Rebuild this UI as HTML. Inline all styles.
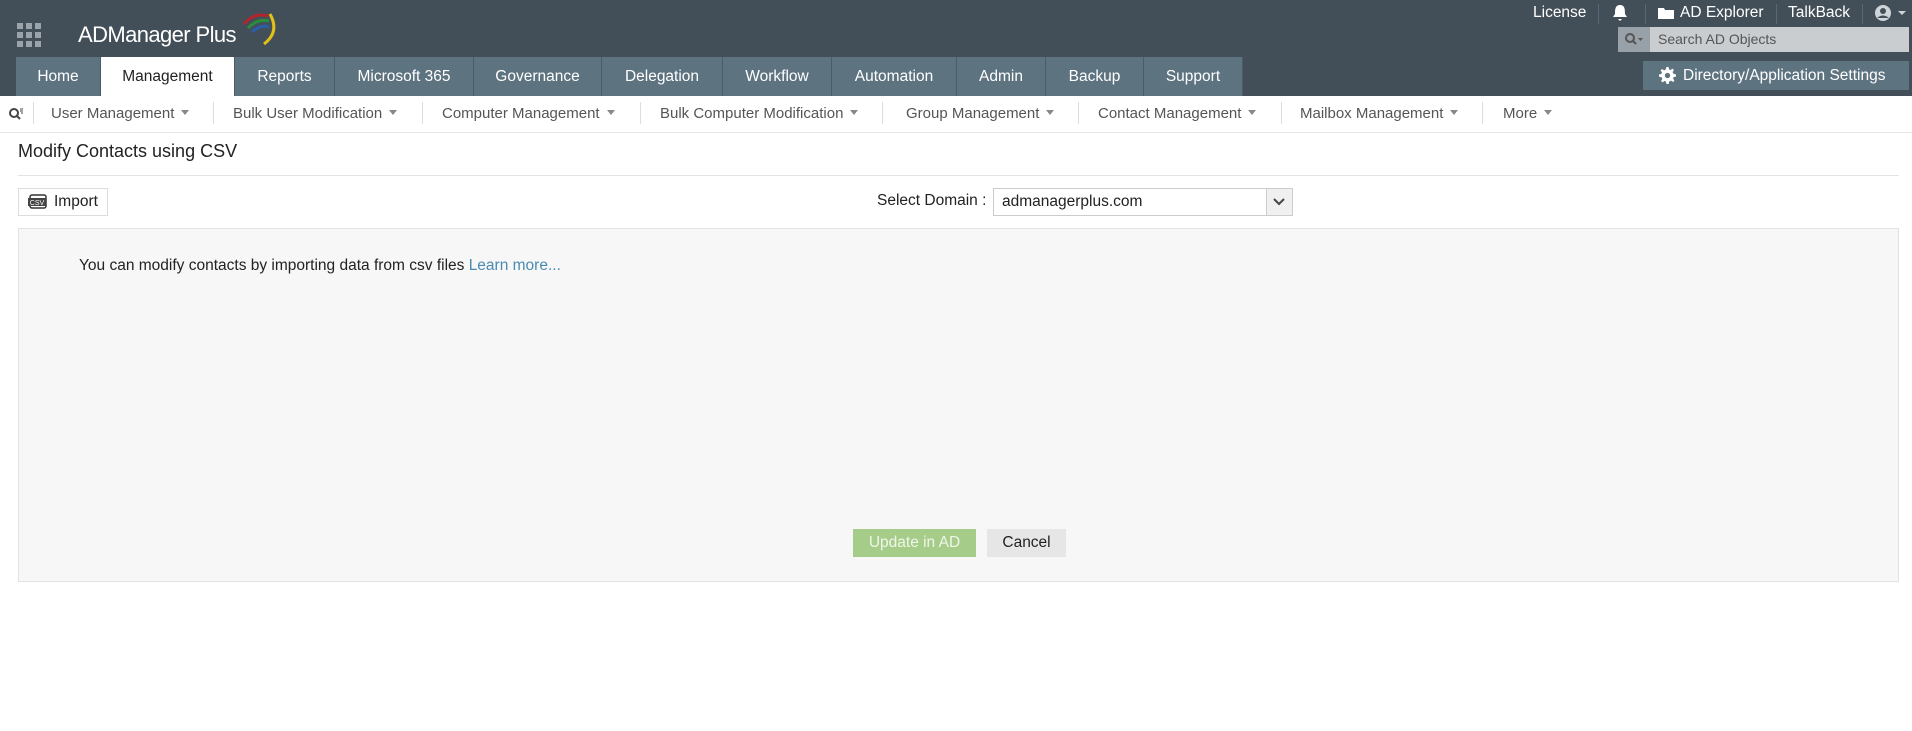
<!DOCTYPE html>
<html><head><meta charset="utf-8"><style>
*{margin:0;padding:0;box-sizing:border-box}
body{width:1912px;height:731px;background:#fff;font-family:"Liberation Sans",sans-serif;position:relative;overflow:hidden;color:#222}
.a{position:absolute;white-space:nowrap}
#hdr{left:0;top:0;width:1912px;height:96px;background:#434f58}
.tab{position:absolute;top:57px;height:39px;background:#5e7380;color:#fff;font-size:15.5px;line-height:39px;text-align:center;border-right:1px solid #4b5c66}
.tab.on{background:#fff;color:#222}
.sub{position:absolute;top:105px;font-size:15px;color:#555;white-space:nowrap}
.sub:after{content:"";display:inline-block;margin-left:7px;border:4px solid transparent;border-top:5px solid #888;vertical-align:-1px}
.sep{position:absolute;top:102px;width:1px;height:22px;background:#ddd}
.tl{position:absolute;top:4px;color:#fff;font-size:15.5px;white-space:nowrap}
</style></head><body>
<div id="hdr" class="a"></div>
<svg class="a" style="left:17px;top:23px" width="24" height="24"><g fill="#9aa3aa"><rect x="0" y="0" width="6" height="6"/><rect x="9" y="0" width="6" height="6"/><rect x="18" y="0" width="6" height="6"/><rect x="0" y="9" width="6" height="6"/><rect x="9" y="9" width="6" height="6"/><rect x="18" y="9" width="6" height="6"/><rect x="0" y="18" width="6" height="6"/><rect x="9" y="18" width="6" height="6"/><rect x="18" y="18" width="6" height="6"/></g></svg>
<div class="a" style="left:78px;top:22px;color:#fff;font-size:22px;letter-spacing:-0.6px">ADManager Plus</div>
<svg class="a" style="left:232px;top:6px" width="45" height="44"><path d="M12 18 Q22 6 36 10" stroke="#b0262e" stroke-width="3" fill="none"/><path d="M16 22 Q26 12 37 15" stroke="#2a8d3e" stroke-width="3" fill="none"/><path d="M20 26 Q29 18 37 21" stroke="#2a5fa8" stroke-width="3" fill="none"/><path d="M38 8 Q48 26 32 38" stroke="#e3c018" stroke-width="3" fill="none"/></svg>
<div class="tab" style="left:16px;width:85px">Home</div>
<div class="tab on" style="left:101px;width:134px">Management</div>
<div class="tab" style="left:235px;width:100px">Reports</div>
<div class="tab" style="left:335px;width:139px">Microsoft 365</div>
<div class="tab" style="left:474px;width:128px">Governance</div>
<div class="tab" style="left:602px;width:121px">Delegation</div>
<div class="tab" style="left:723px;width:109px">Workflow</div>
<div class="tab" style="left:832px;width:125px">Automation</div>
<div class="tab" style="left:957px;width:89px">Admin</div>
<div class="tab" style="left:1046px;width:98px">Backup</div>
<div class="tab" style="left:1144px;width:99px">Support</div>
<div class="tl" style="left:1533px">License</div>
<div class="a" style="left:1598px;top:4px;width:1px;height:20px;background:#5c6870"></div>
<svg class="a" style="left:1612px;top:4px" width="16" height="18"><path d="M8 1 C3 1 3 6 3 10 L1 13 H15 L13 10 C13 6 13 1 8 1Z M6 15 H10 L8 17Z" fill="#fff"/></svg>
<div class="a" style="left:1645px;top:4px;width:1px;height:20px;background:#5c6870"></div>
<svg class="a" style="left:1658px;top:7px" width="16" height="12"><path d="M0 1 H6 L7 3 H16 V12 H0Z" fill="#fff"/></svg>
<div class="tl" style="left:1680px">AD Explorer</div>
<div class="a" style="left:1776px;top:4px;width:1px;height:20px;background:#5c6870"></div>
<div class="tl" style="left:1788px">TalkBack</div>
<div class="a" style="left:1862px;top:4px;width:1px;height:20px;background:#5c6870"></div>
<svg class="a" style="left:1874px;top:4px" width="34" height="18"><circle cx="9" cy="9" r="8" fill="#cfd4d8"/><circle cx="9" cy="7" r="3" fill="#434f58"/><path d="M3 14 Q9 9 15 14" fill="#434f58"/><path d="M24 7 H32 L28 11Z" fill="#cfd4d8"/></svg>
<div class="a" style="left:1618px;top:27px;width:32px;height:25px;background:#98a1a8"></div>
<svg class="a" style="left:1624px;top:32px" width="20" height="14"><circle cx="6" cy="6" r="4" stroke="#555" stroke-width="2" fill="none"/><path d="M9 9 L12 12" stroke="#555" stroke-width="2"/><path d="M14 6 H19 L16.5 9Z" fill="#555"/></svg>
<div class="a" style="left:1650px;top:27px;width:259px;height:25px;background:#c9cdd0;font-size:14px;color:#555;line-height:25px;padding-left:8px">Search AD Objects</div>
<div class="a" style="left:1643px;top:61px;width:266px;height:29px;background:#5e7380;color:#fff;font-size:15.5px;line-height:29px;padding-left:40px">Directory/Application Settings</div>
<svg class="a" style="left:1659px;top:67px" width="17" height="17" viewBox="0 0 16 16"><path fill="#fff" d="M7 0h2l.4 2.2 1.5.6 1.8-1.3 1.4 1.4-1.3 1.8.6 1.5L16 7v2l-2.2.4-.6 1.5 1.3 1.8-1.4 1.4-1.8-1.3-1.5.6L9 16H7l-.4-2.2-1.5-.6-1.8 1.3-1.4-1.4 1.3-1.8-.6-1.5L0 9V7l2.2-.4.6-1.5-1.3-1.8 1.4-1.4 1.8 1.3 1.5-.6z"/><circle cx="8" cy="8" r="2.5" fill="#5e7380"/></svg>
<svg class="a" style="left:8px;top:107px" width="16" height="14"><circle cx="6" cy="6" r="4" stroke="#444" stroke-width="2" fill="none"/><path d="M9 9L12 12" stroke="#444" stroke-width="2"/><path d="M12 2h3M12 4h3M13 6h2" stroke="#444"/></svg>
<div class="sep" style="left:33px"></div><div class="sep" style="left:213px"></div><div class="sep" style="left:422px"></div><div class="sep" style="left:640px"></div><div class="sep" style="left:882px"></div><div class="sep" style="left:1078px"></div><div class="sep" style="left:1281px"></div><div class="sep" style="left:1482px"></div>
<div class="sub" style="left:51px">User Management</div>
<div class="sub" style="left:233px">Bulk User Modification</div>
<div class="sub" style="left:442px">Computer Management</div>
<div class="sub" style="left:660px">Bulk Computer Modification</div>
<div class="sub" style="left:906px">Group Management</div>
<div class="sub" style="left:1098px">Contact Management</div>
<div class="sub" style="left:1300px">Mailbox Management</div>
<div class="sub" style="left:1503px">More</div>
<div class="a" style="left:0;top:132px;width:1912px;height:1px;background:#e6e6e6"></div>
<div class="a" style="left:18px;top:141px;font-size:18px;color:#222">Modify Contacts using CSV</div>
<div class="a" style="left:18px;top:175px;width:1881px;height:1px;background:#e3e3e3"></div>
<div class="a" style="left:18px;top:188px;width:90px;height:28px;border:1px solid #ddd;font-size:15.5px;line-height:26px;padding-left:35px">Import</div>
<svg class="a" style="left:28px;top:194px" width="20" height="16"><rect x="2" y="1" width="16" height="13" rx="2" fill="#fff" stroke="#333" stroke-width="1.5"/><rect x="0" y="4" width="18" height="8" fill="#444"/><text x="9" y="11" font-size="7" fill="#fff" text-anchor="middle" font-family="Liberation Sans">CSV</text></svg>
<div class="a" style="left:877px;top:192px;font-size:15.5px">Select Domain :</div>
<div class="a" style="left:993px;top:188px;width:300px;height:28px;border:1px solid #ccc;font-size:15.5px;line-height:26px;padding-left:8px">admanagerplus.com</div>
<div class="a" style="left:1266px;top:189px;width:26px;height:26px;background:#f0f0f0;border-left:1px solid #ccc"></div>
<svg class="a" style="left:1273px;top:197px" width="12" height="10"><path d="M1 2L6 7L11 2" stroke="#444" stroke-width="2" fill="none"/></svg>
<div class="a" style="left:18px;top:228px;width:1881px;height:354px;background:#f7f7f7;border:1px solid #e3e3e3"></div>
<div class="a" style="left:79px;top:257px;font-size:15.5px">You can modify contacts by importing data from csv files <span style="color:#4a8bb0">Learn more...</span></div>
<div class="a" style="left:853px;top:529px;width:123px;height:28px;background:#a6cc8a;color:#eef6e8;font-size:15.5px;line-height:28px;text-align:center">Update in AD</div>
<div class="a" style="left:987px;top:529px;width:79px;height:28px;background:#e6e6e6;color:#222;font-size:15.5px;line-height:28px;text-align:center">Cancel</div>
</body></html>
